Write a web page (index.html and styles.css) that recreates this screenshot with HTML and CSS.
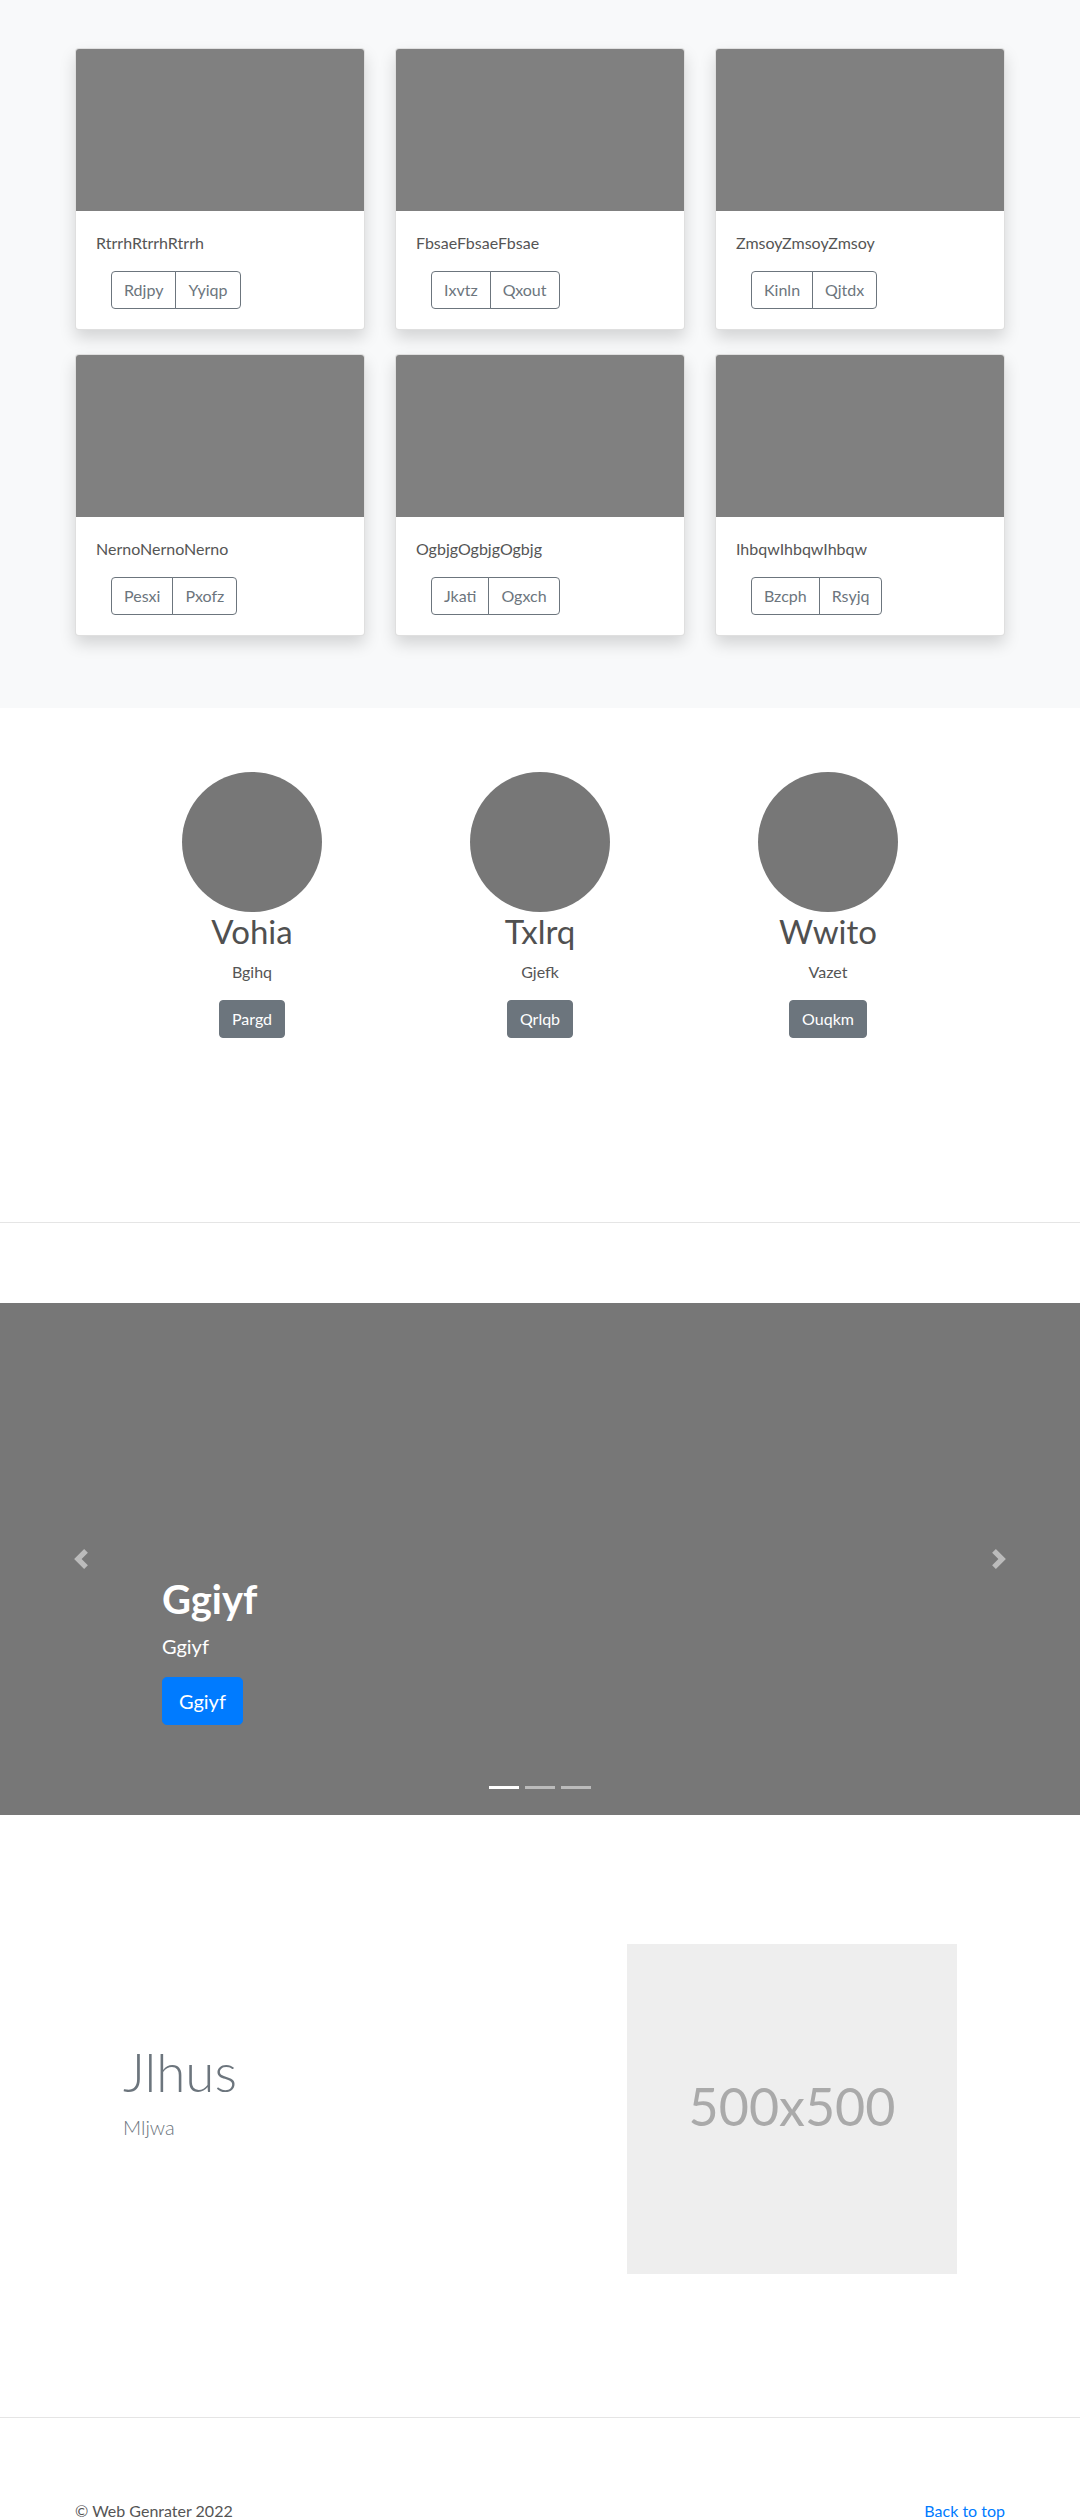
FILE: index.html
```html
<!DOCTYPE html>
<html lang="en">
<head>
<meta charset="utf-8">
<title>Web Genrater</title>
<link rel="stylesheet" href="styles.css">
</head>
<body>
<section class="album">
  <div class="album-grid">
    <div class="card"><div class="card-img"></div><div class="card-body"><p class="card-text">RtrrhRtrrhRtrrh</p><div class="btn-group"><span class="btn-o">Rdjpy</span><span class="btn-o">Yyiqp</span></div></div></div>
    <div class="card"><div class="card-img"></div><div class="card-body"><p class="card-text">FbsaeFbsaeFbsae</p><div class="btn-group"><span class="btn-o">Ixvtz</span><span class="btn-o">Qxout</span></div></div></div>
    <div class="card"><div class="card-img"></div><div class="card-body"><p class="card-text">ZmsoyZmsoyZmsoy</p><div class="btn-group"><span class="btn-o">Kinln</span><span class="btn-o">Qjtdx</span></div></div></div>
    <div class="card"><div class="card-img"></div><div class="card-body"><p class="card-text">NernoNernoNerno</p><div class="btn-group"><span class="btn-o">Pesxi</span><span class="btn-o">Pxofz</span></div></div></div>
    <div class="card"><div class="card-img"></div><div class="card-body"><p class="card-text">OgbjgOgbjgOgbjg</p><div class="btn-group"><span class="btn-o">Jkati</span><span class="btn-o">Ogxch</span></div></div></div>
    <div class="card"><div class="card-img"></div><div class="card-body"><p class="card-text">IhbqwIhbqwIhbqw</p><div class="btn-group"><span class="btn-o">Bzcph</span><span class="btn-o">Rsyjq</span></div></div></div>
  </div>
</section>

<section class="team">
  <div class="team-grid">
    <div class="member"><div class="avatar"></div><h2 class="member-name">Vohia</h2><p class="member-role">Bgihq</p><span class="btn-s">Pargd</span></div>
    <div class="member"><div class="avatar"></div><h2 class="member-name">Txlrq</h2><p class="member-role">Gjefk</p><span class="btn-s">Qrlqb</span></div>
    <div class="member"><div class="avatar"></div><h2 class="member-name">Wwito</h2><p class="member-role">Vazet</p><span class="btn-s">Ouqkm</span></div>
  </div>
</section>

<hr class="divider">

<section class="carousel">
  <span class="ctrl ctrl-prev"><svg viewBox="0 0 8 8" width="20" height="20"><path fill="#fff" d="M5.25 0l-4 4 4 4 1.5-1.5L4.25 4l2.5-2.5L5.25 0z"/></svg></span>
  <span class="ctrl ctrl-next"><svg viewBox="0 0 8 8" width="20" height="20"><path fill="#fff" d="M2.75 0l-1.5 1.5L3.75 4l-2.5 2.5L2.75 8l4-4-4-4z"/></svg></span>
  <div class="caption">
    <h1 class="caption-title">Ggiyf</h1>
    <p class="caption-lead">Ggiyf</p>
    <p class="caption-action"><span class="btn-lg">Ggiyf</span></p>
  </div>
  <ol class="indicators"><li class="active"></li><li></li><li></li></ol>
</section>

<section class="featurette">
  <div class="featurette-row">
    <div class="featurette-text">
      <h2 class="featurette-heading">Jlhus</h2>
      <p class="featurette-lead">Mljwa</p>
    </div>
    <div class="placeholder">500x500</div>
  </div>
</section>

<hr class="divider divider-foot">

<footer class="footer">
  <span class="copy">© Web Genrater 2022</span>
  <a class="back" href="#">Back to top</a>
</footer>
</body>
</html>
```

FILE: styles.css
```css
* { box-sizing: border-box; }
html, body { margin: 0; padding: 0; }
body {
  font-family: "Segoe UI", Lato, "Noto Sans", sans-serif;
  font-size: 16px;
  line-height: 1.5;
  color: #212529;
  background: #fff;
}

/* album */
.album {
  background: #f8f9fa;
  padding: 48px 0 48px;
}
.album-grid {
  width: 930px;
  margin: 0 auto;
  display: grid;
  grid-template-columns: repeat(3, 1fr);
  column-gap: 30px;
  row-gap: 24px;
  padding-bottom: 24px;
}
.card {
  background: #fff;
  border: 1px solid rgba(0,0,0,.125);
  border-radius: 4px;
  overflow: hidden;
  box-shadow: 0 8px 16px rgba(0,0,0,.15);
}
.card-img { height: 162px; background: #808080; }
.card-body { padding: 20px; }
.card-text { margin: 0 0 16px; color: #555; }
.btn-group { display: inline-flex; margin-left: 15px; }
.btn-o {
  display: inline-block;
  padding: 6px 12px;
  line-height: 24px;
  color: #6c757d;
  border: 1px solid #6c757d;
}
.btn-o:first-child { border-radius: 4px 0 0 4px; }
.btn-o:last-child { border-radius: 0 4px 4px 0; margin-left: -1px; }

/* team */
.team { padding: 64px 0 168px; }
.team-grid {
  width: 864px;
  margin: 0 auto;
  display: grid;
  grid-template-columns: repeat(3, 1fr);
  text-align: center;
}
.member { display: flex; flex-direction: column; align-items: center; padding-bottom: 16px; }
.avatar { width: 140px; height: 140px; border-radius: 50%; background: #777; }
.member-name {
  margin: 0 0 8px;
  font-size: 33px;
  font-weight: 400;
  line-height: 1.2;
  color: #505050;
}
.member-role { margin: 0 0 16px; color: #555; }
.btn-s {
  display: inline-block;
  padding: 6px 12px;
  line-height: 24px;
  border: 1px solid #6c757d;
  background: #6c757d;
  color: #fff;
  border-radius: 4px;
}

.divider {
  margin: 0;
  border: 0;
  border-top: 1px solid rgba(0,0,0,.1);
  margin-bottom: 80px;
}

/* carousel */
.carousel {
  position: relative;
  height: 512px;
  background: #777;
}
.ctrl {
  position: absolute;
  top: 0;
  bottom: 0;
  width: 15%;
  display: flex;
  align-items: center;
  justify-content: center;
  opacity: .5;
}
.ctrl svg { display: block; }
.ctrl-prev { left: 0; }
.ctrl-next { right: 0; }
.caption {
  position: absolute;
  left: 15%;
  right: 15%;
  bottom: 70px;
  padding: 20px 0;
  color: #fff;
  text-align: left;
}
.caption-title {
  margin: 0 0 8px;
  font-size: 40px;
  line-height: 48px;
  font-weight: 700;
}
.caption-lead { margin: 0 0 16px; font-size: 20px; line-height: 30px; }
.caption-action { margin: 0; }
.btn-lg {
  display: inline-block;
  padding: 8px 16px;
  font-size: 20px;
  line-height: 30px;
  background: #007bff;
  border: 1px solid #007bff;
  border-radius: 4.8px;
  color: #fff;
}
.indicators {
  position: absolute;
  left: 0;
  right: 0;
  bottom: 0;
  margin: 0 0 16px;
  padding: 0;
  list-style: none;
  display: flex;
  justify-content: center;
}
.indicators li {
  width: 30px;
  height: 23px;
  margin: 0 3px;
  border-top: 10px solid transparent;
  border-bottom: 10px solid transparent;
  background: #fff;
  background-clip: padding-box;
  opacity: .5;
}
.indicators li.active { opacity: 1; }

/* featurette */
.featurette { padding: 129px 0 143px; }
.featurette-row {
  width: 834px;
  margin: 0 auto;
  display: grid;
  grid-template-columns: 1fr 330px;
  align-items: center;
}
.featurette-heading {
  margin: 0 0 8px;
  font-size: 53px;
  line-height: 1.2;
  font-weight: 300;
  color: #6c757d;
}
.featurette-lead {
  margin: 0 0 35px;
  font-size: 20px;
  line-height: 30px;
  font-weight: 300;
  color: #6c757d;
}
.placeholder {
  height: 330px;
  background: #eee;
  color: #aaa;
  display: flex;
  align-items: center;
  justify-content: center;
  font-size: 52px;
  padding-bottom: 6px;
}

/* footer */
.divider-foot { margin-bottom: 0; }
.footer {
  width: 930px;
  margin: 0 auto;
  padding: 81px 0 48px;
  display: flex;
  justify-content: space-between;
  color: #555;
}
.back { color: #007bff; text-decoration: none; }
```
